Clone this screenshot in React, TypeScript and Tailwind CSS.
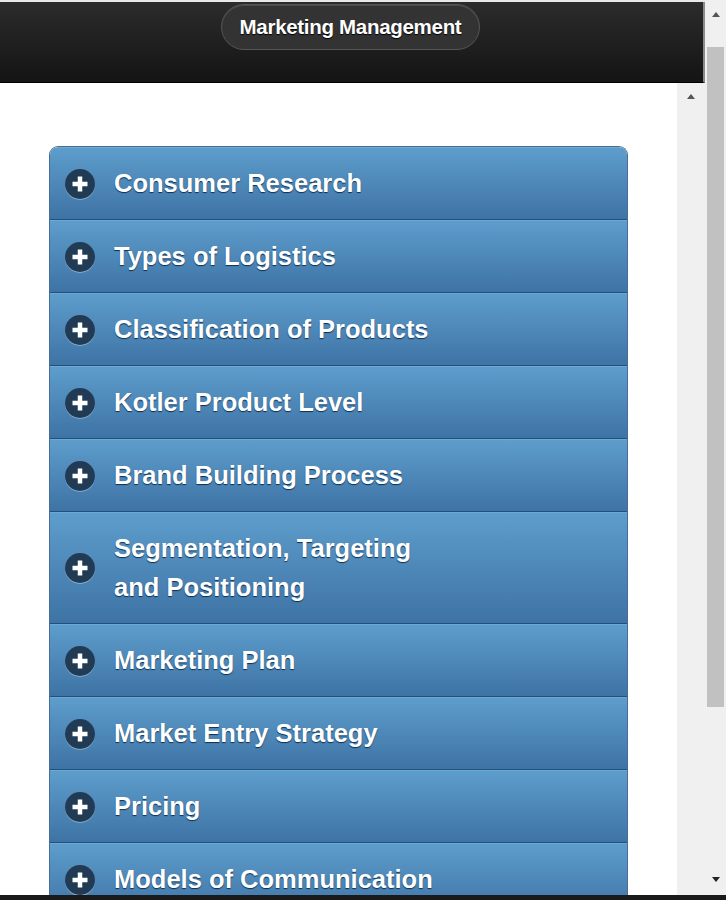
import { Fragment } from 'react'

const topics = [
  ['Consumer Research'],
  ['Types of Logistics'],
  ['Classification of Products'],
  ['Kotler Product Level'],
  ['Brand Building Process'],
  ['Segmentation, Targeting', 'and Positioning'],
  ['Marketing Plan'],
  ['Market Entry Strategy'],
  ['Pricing'],
  ['Models of Communication'],
]

function PlusIcon() {
  return (
    <span className="flex h-[30px] w-[30px] shrink-0 items-center justify-center rounded-full bg-[#223b55] shadow-[0_1px_0_rgba(255,255,255,0.35)]">
      <svg width="18" height="18" viewBox="0 0 18 18">
        <path d="M9 1.5v15M1.5 9h15" stroke="#fff" strokeWidth="4.5" strokeLinecap="butt" />
      </svg>
    </span>
  )
}

function Arrow({ down }: { down?: boolean }) {
  return (
    <svg width="8" height="5" viewBox="0 0 8 5">
      <path d={down ? 'M0 0h8L4 5z' : 'M4 0l4 5H0z'} fill={down ? '#222' : '#555'} />
    </svg>
  )
}

export default function App() {
  return (
    <div className="flex h-[900px] w-[726px] flex-col overflow-hidden bg-black font-['Liberation_Sans',Arial,sans-serif]">
      <div className="flex min-h-0 flex-1">
        <div className="flex min-w-0 flex-1 flex-col bg-[#e9e9e9] pt-[2px]">
          {/* header bar */}
          <div className="flex h-[81px] shrink-0 items-start justify-center border-r-[2px] border-b border-r-[#8a8a8a] border-b-black bg-gradient-to-b from-[#2c2c2c] to-[#141414] pr-[2px] pt-[2px]">
            <div className="flex h-[46px] items-center rounded-full border border-[#555] bg-[#333] px-[18px] shadow-[inset_0_1px_0_rgba(255,255,255,0.12)]">
              <span className="text-[20.5px] font-bold tracking-[-0.3px] text-white [text-shadow:0_1px_1px_#000]">
                Marketing Management
              </span>
            </div>
          </div>

          <div className="flex min-h-0 flex-1">
            {/* page content */}
            <div className="min-w-0 flex-1 overflow-hidden bg-white pl-[49px] pr-[49px] pt-[63px]">
              <div className="overflow-hidden rounded-t-[9px] border-x border-t border-[#4a6e92]">
                {topics.map((lines, i) => (
                  <div
                    key={i}
                    className="flex items-center gap-[19px] border-b border-t border-b-[#234f7c] border-t-[#6ea9d4] bg-gradient-to-b from-[#5d9dcc] to-[#3e73a5] py-[16px] pl-[15px]"
                  >
                    <PlusIcon />
                    <span className="text-[25.5px] font-bold leading-[39px] text-white [text-shadow:0_1px_1px_#0d2f52]">
                      {lines.map((l, j) => (
                        <Fragment key={j}>
                          {j > 0 && <br />}
                          {l}
                        </Fragment>
                      ))}
                    </span>
                  </div>
                ))}
              </div>
            </div>
            {/* inner scrollbar */}
            <div className="flex w-[28px] shrink-0 flex-col items-center bg-[#f0f0f0] pt-[11px]">
              <Arrow />
            </div>
          </div>
        </div>

        {/* outer scrollbar */}
        <div className="flex w-[21px] shrink-0 flex-col items-center bg-[#f0f0f0] pt-[12px]">
          <Arrow />
          <div className="mt-[30px] h-[660px] w-[17px] bg-[#c1c1c1]" />
          <div className="flex-1" />
          <div className="pb-[13px]">
            <Arrow down />
          </div>
        </div>
      </div>
      <div className="h-[5px] shrink-0 bg-[#1a1a1a]" />
    </div>
  )
}
